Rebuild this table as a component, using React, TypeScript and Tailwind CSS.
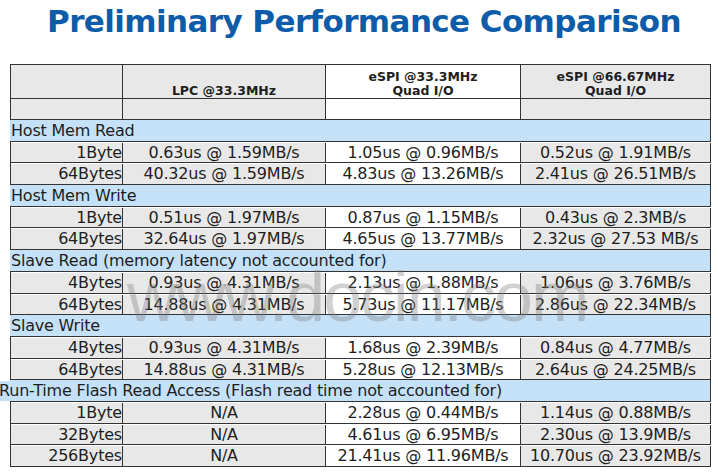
const sections = [
  {
    title: "Host Mem Read",
    rows: [
      ["1Byte", "0.63us @ 1.59MB/s", "1.05us @ 0.96MB/s", "0.52us @ 1.91MB/s"],
      ["64Bytes", "40.32us @ 1.59MB/s", "4.83us @ 13.26MB/s", "2.41us @ 26.51MB/s"],
    ],
  },
  {
    title: "Host Mem Write",
    rows: [
      ["1Byte", "0.51us @ 1.97MB/s", "0.87us @ 1.15MB/s", "0.43us @ 2.3MB/s"],
      ["64Bytes", "32.64us @ 1.97MB/s", "4.65us @ 13.77MB/s", "2.32us @ 27.53 MB/s"],
    ],
  },
  {
    title: "Slave Read (memory latency not accounted for)",
    rows: [
      ["4Bytes", "0.93us @ 4.31MB/s", "2.13us @ 1.88MB/s", "1.06us @ 3.76MB/s"],
      ["64Bytes", "14.88us @ 4.31MB/s", "5.73us @ 11.17MB/s", "2.86us @ 22.34MB/s"],
    ],
  },
  {
    title: "Slave Write",
    rows: [
      ["4Bytes", "0.93us @ 4.31MB/s", "1.68us @ 2.39MB/s", "0.84us @ 4.77MB/s"],
      ["64Bytes", "14.88us @ 4.31MB/s", "5.28us @ 12.13MB/s", "2.64us @ 24.25MB/s"],
    ],
  },
  {
    title: "Run-Time Flash Read Access (Flash read time not accounted for)",
    shift: true,
    rows: [
      ["1Byte", "N/A", "2.28us @ 0.44MB/s", "1.14us @ 0.88MB/s"],
      ["32Bytes", "N/A", "4.61us @ 6.95MB/s", "2.30us @ 13.9MB/s"],
      ["256Bytes", "N/A", "21.41us @ 11.96MB/s", "10.70us @ 23.92MB/s"],
    ],
  },
];

const font = { fontFamily: "'DejaVu Sans', Verdana, sans-serif" };

export default function App() {
  return (
    <div
      className="relative w-[718px] h-[473px] overflow-hidden bg-white text-[#1e1e1e]"
      style={font}
    >
      {/* Title */}
      <div className="h-[64px] pl-[10px] pt-[1px] text-center">
        <h1 className="text-[31px] leading-[40px] font-bold tracking-[-0.6px] text-[#0d5ca9]">
          Preliminary Performance Comparison
        </h1>
      </div>

      {/* Table */}
      <div className="ml-[10px] w-[701px] border-t border-[#333]">
        {/* Header */}
        <div className="flex h-[34px] border-b border-l border-[#333] text-[12.5px] font-bold leading-[14px]">
          <div className="w-[112px] border-r border-[#333] bg-[#e8e8e8]" />
          <div className="flex w-[203px] flex-col items-center justify-end border-r border-[#333] bg-[#e8e8e8]">
            <span>LPC @33.3MHz</span>
          </div>
          <div className="flex w-[195px] flex-col items-center justify-end border-r border-[#333] bg-white">
            <span>eSPI @33.3MHz</span>
            <span>Quad I/O</span>
          </div>
          <div className="flex w-[190px] flex-col items-center justify-end border-r border-[#333] bg-[#e8e8e8]">
            <span>eSPI @66.67MHz</span>
            <span>Quad I/O</span>
          </div>
        </div>
        <div className="flex h-[21px] border-b border-l border-[#333]">
          <div className="w-[112px] border-r border-[#333] bg-[#e8e8e8]" />
          <div className="w-[203px] border-r border-[#333] bg-[#e8e8e8]" />
          <div className="w-[195px] border-r border-[#333] bg-white" />
          <div className="w-[190px] border-r border-[#333] bg-[#e8e8e8]" />
        </div>

        {sections.map((s) => (
          <div key={s.title} className="text-[16px] tracking-[-0.2px]">
            <div className="flex h-[21.7px] border-b border-r border-[#333] bg-[#c5e1f7] pt-[1px] leading-[20.7px]">
              <span
                className={
                  s.shift
                    ? "-ml-[11px] whitespace-nowrap bg-[#c5e1f7] pl-0"
                    : "whitespace-nowrap pl-[1px]"
                }
              >
                {s.title}
              </span>
            </div>
            {s.rows.map((r, i) => (
              <div
                key={i}
                className="flex h-[21.7px] border-b border-l border-[#333] pt-[1px] leading-[20.7px]"
              >
                <div className="w-[112px] border-r border-[#333] bg-[#e8e8e8] text-right">
                  {r[0]}
                </div>
                <div className="w-[203px] border-r border-[#333] bg-[#e8e8e8] text-center">
                  {r[1]}
                </div>
                <div className="w-[195px] border-r border-[#333] bg-white text-center">
                  {r[2]}
                </div>
                <div className="w-[190px] border-r border-[#333] bg-[#e8e8e8] text-center">
                  {r[3]}
                </div>
              </div>
            ))}
          </div>
        ))}
      </div>

      {/* Watermark */}
      <div
        className="pointer-events-none absolute left-[127px] top-[262px] whitespace-nowrap text-[70px] leading-none tracking-[-2px] text-[#7a7a7a]/35"
        style={{ fontFamily: "'Liberation Sans', Arial, sans-serif" }}
      >
        www.docin.com
      </div>
    </div>
  );
}
